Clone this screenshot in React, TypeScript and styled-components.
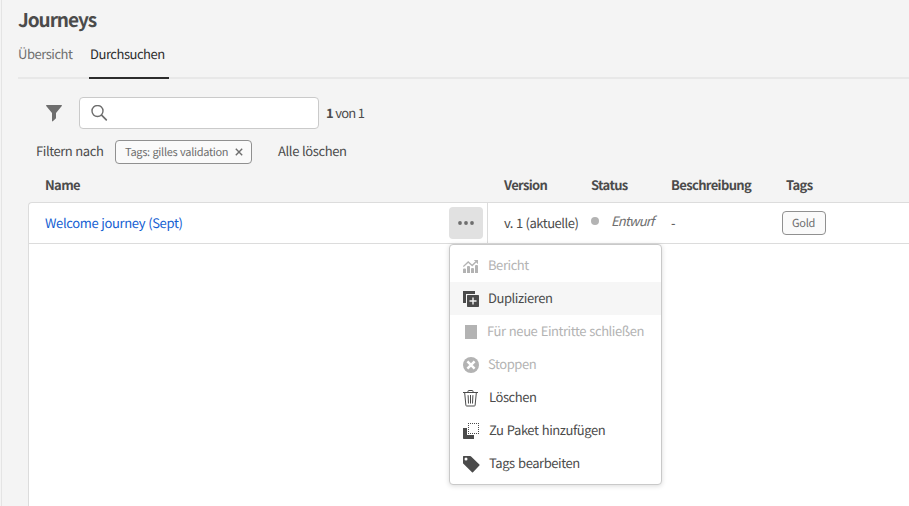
import React from "react";
import styled, { createGlobalStyle, css } from "styled-components";

const GlobalStyle = createGlobalStyle`
  * { box-sizing: border-box; }
  body {
    margin: 0;
    background: #f4f4f4;
    overflow: hidden;
    font-family: "Noto Sans CJK SC", "Open Sans", sans-serif;
    font-size: 13px;
    letter-spacing: -0.47px;
    word-spacing: 0.5px;
    text-rendering: geometricPrecision;
    color: #4b4b4b;
  }
`;

const Page = styled.main`
  width: 100vw;
  height: 100vh;
  margin-left: 1px;
  padding-left: 16px;
  border-left: 1px solid #e4e4e4;
  display: flex;
  flex-direction: column;
  overflow: hidden;
`;

const Title = styled.h1`
  margin: 0;
  height: 40px;
  font-size: 19px;
  line-height: 40px;
  font-weight: 700;
  letter-spacing: -1.05px;
`;

const Tabs = styled.nav`
  display: flex;
  gap: 16px;
  height: 39px;
  border-bottom: 2px solid #e8e8e8;
`;

const Tab = styled.a<{ $active?: boolean }>`
  height: 39px;
  line-height: 28px;
  color: ${(p) => (p.$active ? "#2c2c2c" : "#6e6e6e")};
  ${(p) =>
    p.$active
      ? css`
          width: 80px;
          padding-left: 1px;
          border-bottom: 2px solid #2c2c2c;
        `
      : css`
          width: 55px;
        `}
`;

const SearchRow = styled.div`
  display: flex;
  align-items: center;
  height: 32px;
  margin-top: 18px;
  padding-left: 28px;
`;

const SearchField = styled.div`
  display: flex;
  align-items: center;
  width: 240px;
  height: 32px;
  margin: 0 7px 0 17px;
  padding-left: 11px;
  border: 1px solid #cacaca;
  border-radius: 4px;
  background: #fff;
`;

const ResultCount = styled.span`
  line-height: 32px;
  height: 32px;
  letter-spacing: -0.85px;
  word-spacing: 0.4px;
`;

const FilterRow = styled.div`
  display: flex;
  height: 24px;
  margin-top: 11px;
  padding-left: 18px;
  line-height: 22px;
`;

const FilterLabel = styled.span`
  width: 79px;
  letter-spacing: -0.43px;
`;

const Chip = styled.span<{ $width: number }>`
  display: flex;
  align-items: center;
  justify-content: space-between;
  width: ${(p) => p.$width}px;
  height: 24px;
  padding: 0 8px 0 9px;
  border: 1px solid #909090;
  border-radius: 4px;
  background: #fafafa;
  color: #6e6e6e;
  font-size: 11px;
  line-height: 22px;
  letter-spacing: -0.3px;
  white-space: nowrap;
`;

const ChipText = styled.span`
  height: 22px;
`;

const ClearAll = styled.span`
  margin-left: 26px;
  letter-spacing: -0.38px;
`;

const columns = css`
  display: grid;
  grid-template-columns: 459px 103px 80px 111px 1fr;
`;

const HeaderRow = styled.div`
  ${columns}
  height: 38px;
  padding-left: 11px;
  line-height: 42px;
  font-weight: 700;
  letter-spacing: -0.64px;

  span:first-child,
  span:nth-child(2) {
    padding-left: 16px;
  }
  span:nth-child(5) {
    padding-left: 4px;
  }
`;

const Table = styled.section`
  flex: 1;
  margin-left: 10px;
  border: 1px solid #dcdcdc;
  border-right: 0;
  border-bottom: 0;
  border-radius: 4px 0 0 0;
  background: #fff;
`;

const Row = styled.div`
  ${columns}
  height: 41px;
  border-bottom: 1px solid #dcdcdc;
  line-height: 40px;
`;

const NameCell = styled.div`
  display: flex;
  align-items: center;
  justify-content: space-between;
  padding: 0 4px 0 16px;
  border-right: 1px solid #dcdcdc;
  color: #1460d2;
`;

const NameLink = styled.a`
  letter-spacing: -0.36px;
`;

const VersionCell = styled.div`
  padding-left: 16px;
  white-space: nowrap;
`;

const StatusCell = styled.div`
  display: flex;
  align-items: center;
  gap: 12px;
  height: 36px;
  font-style: italic;
  letter-spacing: -0.82px;
  color: #6e6e6e;
`;

const Dot = styled.i`
  width: 8px;
  height: 8px;
  border-radius: 50%;
  background: #b3b3b3;
`;

const TagCell = styled.div`
  display: flex;
  align-items: center;
`;

const MenuAnchor = styled.div`
  position: relative;
  height: 32px;
`;

const MoreButton = styled.button`
  display: flex;
  align-items: center;
  justify-content: center;
  width: 34px;
  height: 32px;
  padding: 0;
  border: 0;
  border-radius: 4px;
  background: #e1e1e1;
`;

const Menu = styled.ul`
  position: absolute;
  z-index: 1;
  top: 37px;
  left: 0;
  width: 213px;
  margin: 0;
  padding: 4px 0;
  list-style: none;
  border: 1px solid #c9c9c9;
  border-radius: 4px;
  background: #fff;
  box-shadow: 0 1px 5px rgba(0, 0, 0, 0.15);
  letter-spacing: -0.43px;
  word-spacing: 0.8px;
`;

const MenuItem = styled.li<{ $disabled?: boolean; $hover?: boolean; $indent: number }>`
  display: flex;
  height: 33px;
  padding-left: 13px;
  line-height: 31px;
  white-space: nowrap;
  color: ${(p) => (p.$disabled ? "#b3b3b3" : "#4b4b4b")};
  background: ${(p) => (p.$hover ? "#f6f6f6" : "transparent")};

  svg {
    flex: none;
    margin-top: 9px;
    margin-right: ${(p) => p.$indent}px;
  }
`;

const FunnelIcon = () => (
  <svg width="16" height="17" viewBox="0 0 16 17" fill="#6e6e6e">
    <path d="M.6 0h14.800c.5 0 .7.500.4.900L10 8v5.300l-3.200 3c-.3.200-.8 0-.8-.4V8L.2.900C-.1.500.1 0 .6 0z" />
  </svg>
);

const SearchIcon = () => (
  <svg width="17" height="17" viewBox="0 0 17 17" fill="none" stroke="#6e6e6e" strokeLinecap="round">
    <circle cx="6.500" cy="6" r="5.500" strokeWidth="1.400" />
    <path d="M10.600 10.200l4.700 4.700" strokeWidth="1.700" />
  </svg>
);

const CrossIcon = () => (
  <svg width="8" height="8" viewBox="0 0 8 8" stroke="#6e6e6e" strokeWidth="1.4">
    <path d="M.8.8l6.400 6.400M7.200.8L.8 7.200" />
  </svg>
);

const MoreIcon = () => (
  <svg width="16" height="4" viewBox="0 0 16 4" fill="#6e6e6e">
    <circle cx="2" cy="2" r="1.900" />
    <circle cx="8" cy="2" r="1.900" />
    <circle cx="14" cy="2" r="1.900" />
  </svg>
);

const ReportIcon = () => (
  <svg width="16" height="16" viewBox="0 0 16 16" fill="#b3b3b3">
    <path d="M0 11.500q0-1 1-1h1q1 0 1 1V15H0zM4 9q0-1 1-1h1q1 0 1 1v6H4zM8 11q0-1 1-1h1q1 0 1 1v4H8zM12 8q0-1 1-1h1q1 0 1 1v7h-3z" />
    <path d="M.3 8.600L5.200 4l4 3.600L13 3.700" fill="none" stroke="#b3b3b3" strokeWidth="1.400" />
    <path d="M10.800 2H15v4.200z" />
  </svg>
);

const DuplicateIcon = () => (
  <svg width="16" height="16" viewBox="0 0 16 16" fill="#4b4b4b">
    <path d="M0 0h12v3H3v9H0z" />
    <path fillRule="evenodd" d="M4.700 4h10.600q.7 0 .7.700v10.600q0 .7-.7.700H4.700q-.7 0-.7-.7V4.700q0-.7.700-.7zM9.300 6.500v2.800H6.500v1.400h2.800v2.800h1.400v-2.800h2.800V9.300h-2.800V6.500z" />
  </svg>
);

const SquareIcon = () => (
  <svg width="16" height="16" viewBox="0 0 16 16" fill="#b3b3b3">
    <rect x="2" y="1" width="12" height="14" />
  </svg>
);

const StopIcon = () => (
  <svg width="16" height="16" viewBox="0 0 16 16">
    <circle cx="8" cy="8" r="8" fill="#b3b3b3" />
    <path d="M4.400 4.400l7.200 7.200M11.600 4.400l-7.200 7.200" stroke="#fff" strokeWidth="2.500" />
  </svg>
);

const TrashIcon = () => (
  <svg width="16" height="17" viewBox="0 0 16 17" fill="none" stroke="#4b4b4b">
    <path d="M0 2.500h15M5 2.500V1.200q0-.7.700-.7h3.600q.7 0 .7.700v1.300M1.700 3l1.200 12.400q.1.600.7.600h7.800q.6 0 .7-.6L13.300 3" />
    <path d="M5.100 5.200l.4 8.300M7.500 5v8.500M9.900 5.200l-.4 8.300" />
  </svg>
);

const PackageIcon = () => (
  <svg width="16" height="16" viewBox="0 0 16 16">
    <path d="M0 5h4v7h7v4H.7Q0 16 0 15.300z" fill="#4b4b4b" />
    <path d="M5 .5h11M5 10.500h11" stroke="#4b4b4b" strokeDasharray="1 1" />
    <path d="M5.500 2v8M15.500 2v8" stroke="#4b4b4b" strokeDasharray="1 1" />
  </svg>
);

const TagIcon = () => (
  <svg width="17" height="17" viewBox="0 0 17 17" fill="#4b4b4b">
    <path fillRule="evenodd" d="M.6 0h6.600q.5 0 .9.400l8.300 8.200q.5.500 0 1L10 16.300q-.5.500-1 0L.4 7.800Q0 7.500 0 7V.6Q0 0 .6 0zM3 1.500a1.500 1.500 0 100 3 1.500 1.500 0 000-3z" />
  </svg>
);

const menuItems = [
  { label: "Bericht", icon: <ReportIcon />, disabled: true, indent: 9 },
  { label: "Duplizieren", icon: <DuplicateIcon />, hover: true, indent: 9 },
  { label: "Für neue Eintritte schließen", icon: <SquareIcon />, disabled: true, indent: 8 },
  { label: "Stoppen", icon: <StopIcon />, disabled: true, indent: 9 },
  { label: "Löschen", icon: <TrashIcon />, indent: 10 },
  { label: "Zu Paket hinzufügen", icon: <PackageIcon />, indent: 10 },
  { label: "Tags bearbeiten", icon: <TagIcon />, indent: 9 },
];

export default function App() {
  return (
    <>
      <GlobalStyle />
      <Page>
        <Title>Journeys</Title>
        <Tabs>
          <Tab>Übersicht</Tab>
          <Tab $active>Durchsuchen</Tab>
        </Tabs>
        <SearchRow>
          <FunnelIcon />
          <SearchField>
            <SearchIcon />
          </SearchField>
          <ResultCount>
            <b>1</b> von 1
          </ResultCount>
        </SearchRow>
        <FilterRow>
          <FilterLabel>Filtern nach</FilterLabel>
          <Chip $width={137}>
            <ChipText>Tags: gilles validation</ChipText>
            <CrossIcon />
          </Chip>
          <ClearAll>Alle löschen</ClearAll>
        </FilterRow>
        <HeaderRow>
          <span>Name</span>
          <span>Version</span>
          <span>Status</span>
          <span>Beschreibung</span>
          <span>Tags</span>
        </HeaderRow>
        <Table>
          <Row>
            <NameCell>
              <NameLink>Welcome journey (Sept)</NameLink>
              <MenuAnchor>
                <MoreButton>
                  <MoreIcon />
                </MoreButton>
                <Menu>
                  {menuItems.map((m) => (
                    <MenuItem key={m.label} $disabled={m.disabled} $hover={m.hover} $indent={m.indent}>
                      {m.icon}
                      {m.label}
                    </MenuItem>
                  ))}
                </Menu>
              </MenuAnchor>
            </NameCell>
            <VersionCell>v. 1 (aktuelle)</VersionCell>
            <StatusCell>
              <Dot />
              Entwurf
            </StatusCell>
            <div>-</div>
            <TagCell>
              <Chip $width={44}>
                <ChipText>Gold</ChipText>
              </Chip>
            </TagCell>
          </Row>
        </Table>
      </Page>
    </>
  );
}
